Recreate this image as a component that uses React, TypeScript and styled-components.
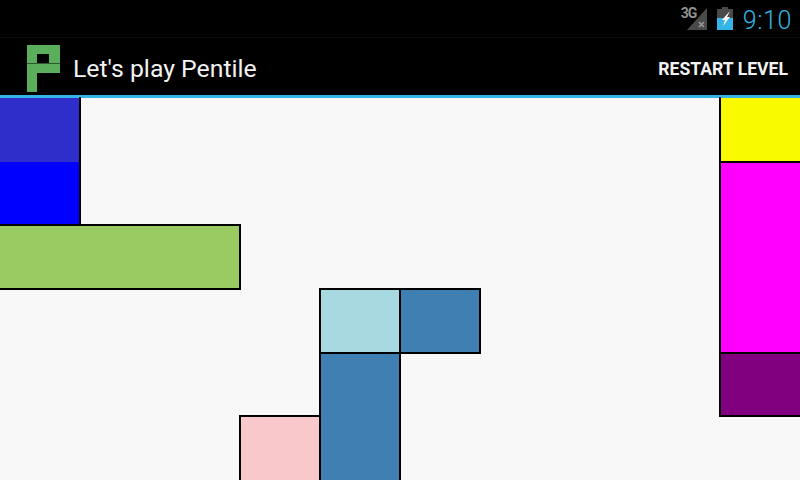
import React from "react";
import styled, { createGlobalStyle } from "styled-components";

const GlobalStyle = createGlobalStyle`
  html, body {
    margin: 0;
    padding: 0;
    background: #000;
  }
  body {
    font-family: Roboto, "Liberation Sans", sans-serif;
  }
`;

const Screen = styled.div`
  width: 800px;
  height: 480px;
  display: flex;
  flex-direction: column;
  overflow: hidden;
`;

const StatusBar = styled.div`
  height: 38px;
  flex: none;
  box-sizing: border-box;
  border-bottom: 1px solid #0c0c0c;
  display: flex;
  justify-content: flex-end;
  align-items: flex-start;
  padding-right: 8px;
  background: #000;
`;

const Signal = styled.div`
  position: relative;
  width: 28px;
  height: 24px;
  margin-top: 7px;
  margin-right: 9px;
`;

const NetworkLabel = styled.span`
  position: absolute;
  left: 1px;
  top: -1px;
  font-size: 14px;
  line-height: 14px;
  font-weight: 700;
  letter-spacing: -1px;
  color: #929292;
`;

const Battery = styled.svg`
  display: block;
  margin-top: 7px;
  margin-right: 10px;
`;

const Clock = styled.span`
  font-size: 25px;
  font-weight: 300;
  line-height: 25px;
  margin-top: 8px;
  letter-spacing: 0.6px;
  color: #33b5e5;
`;

const ActionBar = styled.header`
  height: 60px;
  flex: none;
  box-sizing: border-box;
  border-bottom: 3px solid #33b5e5;
  display: flex;
  align-items: center;
  padding: 4px 12px 0 27px;
  background: #000;
`;

const Logo = styled.svg`
  display: block;
  flex: none;
  margin-right: 13px;
`;

const Title = styled.h1`
  flex: 1;
  margin: 0;
  font-size: 24.8px;
  font-weight: 400;
  color: #f2f2f2;
`;

const RestartButton = styled.button`
  border: 0;
  padding: 0;
  background: none;
  font-family: inherit;
  font-size: 17.6px;
  font-weight: 700;
  color: #f2f2f2;
`;

const Board = styled.main`
  flex: 1;
  display: grid;
  grid-template-columns: repeat(10, 80px);
  grid-template-rows: 64px 63px 64px 64px 63px 64px;
  background: #f8f8f8;
`;

// sides says which edges of the tile carry a black line
const Tile = styled.div<{
  $col: number;
  $row: number;
  $cols?: number;
  $rows?: number;
  $color: string;
  $sides: string;
}>`
  position: relative;
  grid-column: ${(p) => p.$col} / span ${(p) => p.$cols ?? 1};
  grid-row: ${(p) => p.$row} / span ${(p) => p.$rows ?? 1};
  background: ${(p) => p.$color};

  &::after {
    content: "";
    position: absolute;
    inset: -1px;
    border-style: solid;
    border-color: #000;
    border-width: ${(p) =>
      ["t", "r", "b", "l"]
        .map((s) => (p.$sides.includes(s) ? "2px" : "0"))
        .join(" ")};
  }
`;

export default function App() {
  return (
    <Screen>
      <GlobalStyle />
      <StatusBar>
        <Signal>
          <svg width="28" height="24" viewBox="0 0 28 24">
            <path d="M7 23 L27 1 V23 Z" fill="#4a4a4a" />
            <path d="M19 15 L24 20 M24 15 L19 20" stroke="#9a9a9a" strokeWidth="1.5" />
          </svg>
          <NetworkLabel>3G</NetworkLabel>
        </Signal>
        <Battery width="16" height="23" viewBox="0 0 16 23">
          <path d="M5 0 H11 V2 H16 V23 H0 V2 H5 Z" fill="#4a4a4a" />
          <path d="M0 11 H16 V23 H0 Z" fill="#33b5e5" />
          <path d="M13 4 L5 13 H8 L6 19 L13 10 H10 L13 4 Z" fill="#fff" />
        </Battery>
        <Clock>9:10</Clock>
      </StatusBar>
      <ActionBar>
        <Logo width="33" height="47" viewBox="0 0 33 47">
          <path
            fillRule="evenodd"
            d="M0 0 H33 V28 H10 V47 H0 Z M10 9 V18 H22 V9 Z"
            fill="#5aae5c"
          />
          <path d="M0 18.5 H33" stroke="#2c5a2e" strokeWidth="1" />
        </Logo>
        <Title>Let's play Pentile</Title>
        <RestartButton>RESTART LEVEL</RestartButton>
      </ActionBar>
      <Board>
        <Tile $col={1} $row={1} $color="#302ecb" $sides="r" />
        <Tile $col={1} $row={2} $color="#0000ff" $sides="r" />
        <Tile $col={1} $row={3} $cols={3} $color="#9acb63" $sides="trb" />
        <Tile $col={10} $row={1} $color="#f9f900" $sides="bl" />
        <Tile $col={10} $row={2} $rows={3} $color="#ff00ff" $sides="tl" />
        <Tile $col={10} $row={5} $color="#800080" $sides="tbl" />
        <Tile $col={5} $row={4} $color="#a9d9e0" $sides="trbl" />
        <Tile $col={6} $row={4} $color="#3f7fb1" $sides="trbl" />
        <Tile $col={5} $row={5} $rows={2} $color="#3f7fb1" $sides="trl" />
        <Tile $col={4} $row={6} $color="#f9c8ca" $sides="trl" />
      </Board>
    </Screen>
  );
}
